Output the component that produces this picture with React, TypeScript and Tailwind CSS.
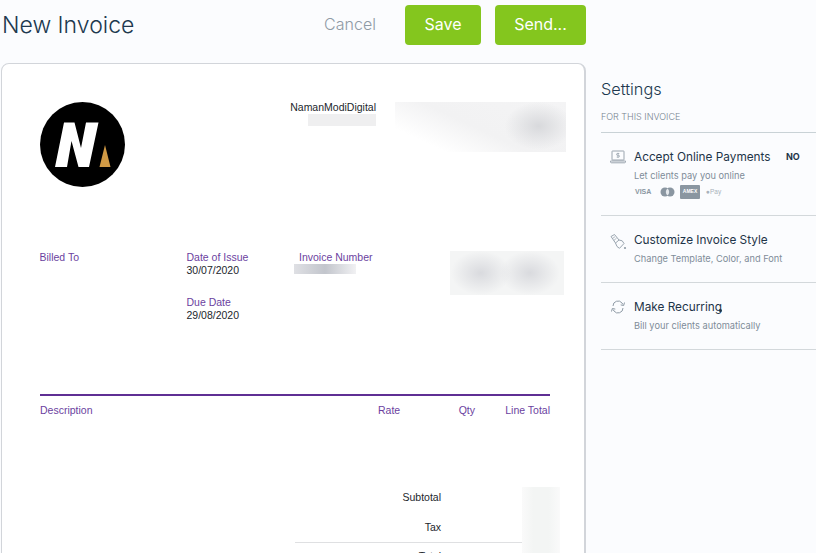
import type { FC, ReactNode } from 'react'

const LaptopIcon = () => (
  <svg width="16" height="14" viewBox="0 0 16 14" fill="none" stroke="#8f9ba6" strokeWidth="0.9">
    <rect x="2" y="1" width="12" height="9" rx="0.5" />
    <path d="M0.5 11h15v0.8a1 1 0 0 1-1 1h-13a1 1 0 0 1-1-1z" />
    <path d="M9.3 3.500H7.400a.9.9 0 0 0 0 1.800h1.200a.9.9 0 0 1 0 1.800H6.700M8 2.800v5" strokeWidth="0.7" />
  </svg>
)

const BrushIcon = () => (
  <svg width="17" height="17" viewBox="0 0 17 17" fill="none" stroke="#8f9ba6" strokeWidth="0.9">
    <path d="M1 3.500 4.500 1.500 9 7 5.500 10z" />
    <path d="M5.500 10 7 13.500l2.500 1.800 4.500-4.800-1.800-2.700L9 7" />
    <path d="m2.500 5.500 2.500-1.800M3.800 7.500l2.800-2.400" strokeWidth="0.7" />
    <circle cx="15" cy="15" r="1.100" fill="#8f9ba6" stroke="none" />
  </svg>
)

const RecurIcon = () => (
  <svg width="16" height="14" viewBox="0 0 16 14" fill="none" stroke="#8f9ba6" strokeWidth="1">
    <path d="M3 6a5 5 0 0 1 9-3l1 1.500" />
    <path d="m14.500 2.500-.8 3-3-.6" />
    <path d="M13 8a5 5 0 0 1-9 3l-1-1.500" />
    <path d="m1.500 11.500.8-3 3 .6" />
  </svg>
)

const Logo = () => (
  <svg width="85" height="85" viewBox="0 0 85 85">
    <circle cx="42.500" cy="42.500" r="42.500" fill="#000" />
    <path d="M15 65 24 20.500h10.500L41 46 46 20.500h12.500L49 65H38.500L31.500 39 27 65z" fill="#fff" />
    <path d="M65 43 70.500 65H59.500z" fill="#d19a45" />
  </svg>
)

const PaymentMarks = () => (
  <div className="mt-[2px] flex items-center text-[#8a96a1]">
    <span className="w-[24px] pl-px text-[7px] font-bold [font-family:'Liberation_Sans',sans-serif]">VISA</span>
    <svg width="15" height="10" viewBox="0 0 15 10" className="ml-[2px]">
      <circle cx="5" cy="5" r="4.500" fill="#8a96a1" />
      <circle cx="10" cy="5" r="4.500" fill="#8a96a1" />
      <path d="M7.500 1.500a4.500 4.500 0 0 1 0 7 4.500 4.500 0 0 1 0-7z" fill="#e4e8ec" />
    </svg>
    <span className="ml-[5px] flex h-[14px] w-[20px] items-center justify-center rounded-[1px] bg-[#8a96a1] text-[5px] font-bold text-white [font-family:'Liberation_Sans',sans-serif]">
      AMEX
    </span>
    <span className="ml-[6px] text-[6.500px] text-[#a9b2bb] [font-family:'Liberation_Sans',sans-serif]">●Pay</span>
  </div>
)

interface SettingRowProps {
  icon: ReactNode
  title: string
  hint: string
  status?: string
  height: string
  children?: ReactNode
}

const SettingRow: FC<SettingRowProps> = ({ icon, title, hint, status, height, children }) => (
  <div className={`flex border-b border-[#d3d8db] pl-[9px] pt-[15px] ${height}`}>
    <div className="w-[24px] shrink-0 pt-[2px]">{icon}</div>
    <div className="flex-1">
      <div className="flex items-center">
        <span className="w-[152px] text-[11.800px] leading-[18px] text-[#1e3448]">{title}</span>
        {status && <span className="text-[9px] font-bold text-[#1e3448]">{status}</span>}
      </div>
      <div className="mt-[3px] text-[9.250px] leading-[14px] text-[#7f8c99]">{hint}</div>
      {children}
    </div>
  </div>
)

export default function App() {
  return (
    <div className="relative flex h-[553px] w-[816px] flex-col overflow-hidden bg-[#fbfcfe] [font-family:Inter,sans-serif]">
      {/* Header */}
      <div className="flex h-[63px] shrink-0 items-start">
        <h1 className="ml-[2px] w-[300px] pt-[8px] text-[23px] leading-[34px] font-light text-[#20384e]">
          New Invoice
        </h1>
        <button className="ml-[18px] mt-[4px] h-[40px] w-[60px] text-center text-[16px] font-light text-[#8f9aa5]">
          Cancel
        </button>
        <button className="ml-[25px] mt-[5px] h-[40px] w-[76px] rounded-[4px] bg-[#84c61e] pb-[2px] text-[16px] font-normal text-white">
          Save
        </button>
        <button className="ml-[14px] mt-[5px] h-[40px] w-[91px] rounded-[4px] bg-[#84c61e] pb-[2px] text-[16px] font-normal text-white">
          Send...
        </button>
      </div>

      <div className="flex min-h-0 flex-1">
        {/* Invoice card */}
        <div className="ml-px h-[520px] w-[585px] shrink-0 rounded-[8px] border border-r-2 border-[#d2d5da] bg-white pl-[38px] pt-[38px] text-[10.500px] leading-[13px] text-[#22262c] [font-family:'Liberation_Sans',Arial,sans-serif]">
          <div className="flex h-[149px] items-start">
            <Logo />
            <div className="ml-[165px] flex w-[86px] flex-col items-end">
              <span className="mt-[-1px] whitespace-nowrap">NamanModiDigital</span>
              <div className="h-[12px] w-[68px] bg-[#efeff0]" />
            </div>
            <div className="ml-[19px] h-[50px] w-[171px] bg-[radial-gradient(ellipse_34px_24px_at_84%_48%,#d8d9dc,transparent),linear-gradient(25deg,#ffffff_18%,#f2f2f3_48%,#f4f4f5_100%)]" />
          </div>

          <div className="flex h-[143px] items-start">
            <div className="ml-[-0.500px] w-[147px] text-[#6b3fa0]">Billed To</div>
            <div className="w-[112.500px]">
              <div className="text-[#6b3fa0]">Date of Issue</div>
              <div>30/07/2020</div>
              <div className="mt-[19px] text-[#6b3fa0]">Due Date</div>
              <div>29/08/2020</div>
            </div>
            <div className="w-[151px]">
              <div className="whitespace-nowrap text-[#6b3fa0]">Invoice Number</div>
              <div className="ml-[-5px] h-[10px] w-[62px] bg-[linear-gradient(90deg,#dfe0e4,#c2c5cc_50%,#f1f1f3)]" />
            </div>
            <div className="h-[44px] w-[114px] bg-[radial-gradient(ellipse_30px_22px_at_27%_50%,#d9dade,transparent),radial-gradient(ellipse_30px_22px_at_70%_50%,#d9dade,transparent),linear-gradient(#f4f5f5,#f4f5f5)]" />
          </div>

          <div className="w-[510px] border-t-2 border-[#5f2f94] pt-[8px] text-[#6b3fa0]">
            <div className="flex">
              <span className="flex-1">Description</span>
              <span className="w-[22px] text-right">Rate</span>
              <span className="w-[75px] text-right">Qty</span>
              <span className="w-[75px] text-right">Line Total</span>
            </div>
          </div>

          <div className="mt-[74px] flex">
            <div className="ml-[255px] w-[227px]">
              <div className="pr-[81px] text-right">Subtotal</div>
              <div className="mt-[17px] pr-[81px] text-right">Tax</div>
              <div className="mt-[8px] border-t border-[#dfe0e2] pr-[81px] pt-[7px] text-right">Total</div>
            </div>
            <div className="mt-[-4px] h-[70px] w-[38px] bg-[linear-gradient(90deg,#fafafa,#f3f5f4_30%,#f3f5f4_70%,#fafafa)]" />
          </div>
        </div>

        {/* Settings */}
        <div className="ml-[15px] flex-1">
          <h2 className="pt-[15px] text-[16.300px] leading-[22px] font-light text-[#20384e]">Settings</h2>
          <div className="mt-[11px] h-[22px] border-b border-[#c9d2d6] text-[9px] leading-[11px] font-light text-[#76838f]">
            FOR THIS INVOICE
          </div>
          <SettingRow
            icon={<LaptopIcon />}
            title="Accept Online Payments"
            hint="Let clients pay you online"
            status="NO"
            height="h-[83px]"
          >
            <PaymentMarks />
          </SettingRow>
          <SettingRow
            icon={<BrushIcon />}
            title="Customize Invoice Style"
            hint="Change Template, Color, and Font"
            height="h-[67px]"
          />
          <SettingRow
            icon={<RecurIcon />}
            title="Make Recurring"
            hint="Bill your clients automatically"
            height="h-[67px]"
          />
        </div>
      </div>

      {/* leftover mouse cursor speck from the capture */}
      <div className="absolute left-[719px] top-[309px] h-[3px] w-[3px] rounded-full bg-[#1e3448]" />
    </div>
  )
}
